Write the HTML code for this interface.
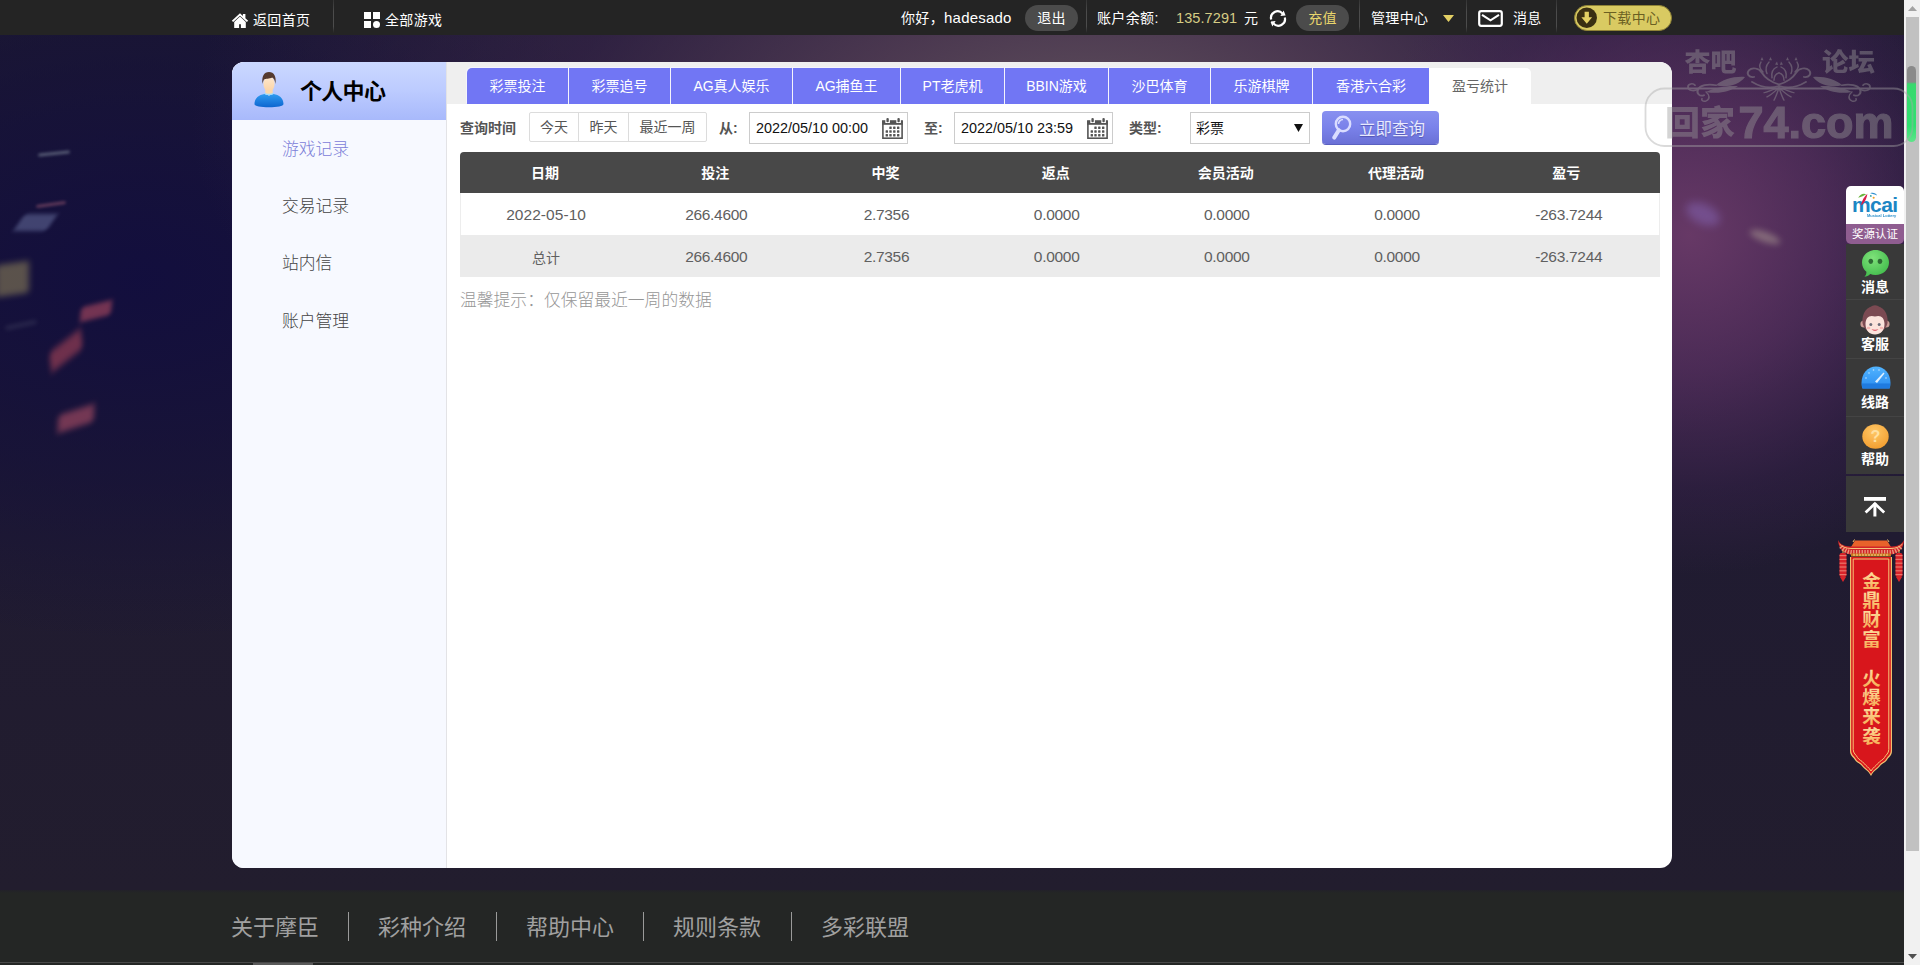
<!DOCTYPE html>
<html lang="zh-CN">
<head>
<meta charset="utf-8">
<title>个人中心 - 盈亏统计</title>
<style>
*{box-sizing:border-box;margin:0;padding:0}
html,body{width:1920px;height:965px;overflow:hidden}
body{position:relative;font-family:"Liberation Sans","Noto Sans CJK SC",sans-serif;font-size:14px;color:#555;background:#221d2e}
ul{list-style:none}
.abs{position:absolute}
/* ---------- page background ---------- */
#bg{position:absolute;left:0;top:0;width:1904px;height:890px;overflow:hidden;
 background:
  radial-gradient(ellipse 340px 340px at 1690px 235px,rgba(106,58,104,.95) 0%,rgba(92,50,98,.7) 40%,rgba(70,38,86,.32) 75%,rgba(50,30,70,0) 100%),
  radial-gradient(ellipse 900px 420px at 1090px 120px,rgba(98,82,94,.95) 0%,rgba(84,62,86,.82) 28%,rgba(62,40,78,.55) 58%,rgba(40,28,62,0) 100%),
  radial-gradient(ellipse 560px 360px at 140px 280px,rgba(18,14,62,.95) 0%,rgba(20,16,58,.6) 55%,rgba(24,20,50,0) 100%),
  linear-gradient(180deg,#1d1931 0%,#1c1736 30%,#201b31 60%,#221d2e 100%);}
.cf{position:absolute;filter:blur(2.5px);border-radius:2px;opacity:.55}
/* ---------- top bar ---------- */
#top{position:absolute;left:0;top:0;width:1904px;height:35px;background:#242424;color:#fff;font-size:14px}
#top .t{position:absolute;white-space:nowrap;line-height:20px;letter-spacing:.35px}
#top .sep{position:absolute;top:0;width:1px;height:33px;background:linear-gradient(180deg,rgba(76,76,76,.4),rgba(76,76,76,1) 35%,rgba(76,76,76,1) 80%,rgba(76,76,76,0))}
.pill{position:absolute;top:5px;height:26px;border-radius:13px;background:#4b4b4b;text-align:center;line-height:26px;font-size:14px;letter-spacing:.35px}
/* ---------- panel ---------- */
#panel{position:absolute;left:232px;top:62px;width:1440px;height:806px;background:#fff;border-radius:12px;overflow:hidden}
#side{position:absolute;left:0;top:0;width:214px;height:806px;background:#f7f9ff}
#sideline{position:absolute;left:214px;top:0;width:1px;height:806px;background:#e3e3e6}
#shead{position:absolute;left:0;top:0;width:214px;height:58px;background:linear-gradient(180deg,#cbd8ff 0%,#bccbff 50%,#a8b9fb 100%)}
#shead b{position:absolute;left:68px;top:13.500px;font-size:22px;line-height:32px;color:#000;font-weight:bold;letter-spacing:-.7px}
#side li{position:absolute;left:50px;font-size:16.800px;line-height:24px;color:#444;white-space:nowrap;font-weight:300}
#side li.on{color:#7c80d8}
/* tabs */
#tabbar{position:absolute;left:215px;top:0;width:1225px;height:42px;background:#efefef}
.tab{position:absolute;top:6px;height:36px;background:#7176f4;box-shadow:-1px -1px 0 #f4f4fc;color:#fff;font-size:14px;line-height:36px;text-align:center;white-space:nowrap}
.tab.on{background:#fff;box-shadow:none;color:#666;border-radius:0 5px 0 0}
/* filter */
.lbl{position:absolute;font-weight:bold;color:#555;font-size:14px;line-height:20px;white-space:nowrap}
.bgrp{position:absolute;left:297px;top:50px;width:178px;height:30px;border:1px solid #dcdcdc;border-radius:2px;background:#fff}
.bgrp span{position:absolute;top:0;height:28px;line-height:28px;text-align:center;color:#555;font-size:14px}
.inp{position:absolute;top:50px;width:159px;height:32px;border:1px solid #ccc;border-radius:0;background:#fff;color:#111;font-size:14.4px;line-height:30px;padding-left:6px;white-space:nowrap}
/* table */
#tbl{position:absolute;left:228px;top:90px;width:1200px;border-collapse:collapse;table-layout:fixed}
#tbl th{height:41px;background:#484848;color:#fff;font-weight:bold;font-size:14px;text-align:center;padding:0 0 1px}
#tbl td{height:42px;text-align:center;color:#606060;font-size:15.500px;letter-spacing:-.3px;padding:1px 0 0 2px}
#tbl tr.r1 td{background:#fff}
#tbl tr.r1 td:first-child{box-shadow:inset 1px 0 0 #ededed}
#tbl tr.r1 td:last-child{box-shadow:inset -1px 0 0 #ededed}
#tbl tr.r2 td{background:#ebebeb}
#note{position:absolute;left:228px;top:226.500px;font-size:16.800px;line-height:24px;color:#969696;white-space:nowrap;font-weight:300}
#qbtn{position:absolute;left:1090px;top:49px;width:117px;height:33px;border-radius:4px;background:linear-gradient(180deg,#8890f0 0%,#7a82ea 50%,#6a70d6 100%);box-shadow:0 1px 0 #5a60c0}
#qbtn span{position:absolute;left:37px;top:5.500px;font-size:16.500px;line-height:24px;color:#e8eaff;white-space:nowrap;text-shadow:0 1px 1px rgba(60,60,150,.6)}
/* footer */
#foot{position:absolute;left:0;top:890px;width:1904px;height:75px;background:linear-gradient(180deg,#222129 0,#242625 3px,#242625 100%)}
#foot span{position:absolute;top:24px;font-size:22px;line-height:28px;color:#a0a0a0;white-space:nowrap}
#foot i{position:absolute;top:22px;width:1px;height:29px;background:#9a9a9a}
/* scrollbar */
#sb{position:absolute;left:1904px;top:0;width:16px;height:965px;background:#f1f1f1}
/* float bar */
#fb{position:absolute;left:1846px;top:186px;width:58px;color:#fff}
#fb .logo{position:absolute;left:0;top:0;width:58px;height:38px;background:#fff;border-radius:5px 5px 0 0}
#fb .logo b{position:absolute;left:6px;top:6.500px;font-size:21px;line-height:24px;font-weight:bold;color:#1c86c4;letter-spacing:-.6px}
#fb .logo em{position:absolute;left:21px;top:27px;font-size:5px;line-height:7px;font-style:normal;font-weight:bold;color:#2a8fca;white-space:nowrap;transform:scale(.8);transform-origin:0 0}
#fb .cert{position:absolute;left:0;top:38px;width:58px;height:20px;background:#8f5d90;border-radius:0 0 5px 5px;font-size:11.500px;line-height:20px;text-align:center;color:#fff;white-space:nowrap}
#fb .it{position:absolute;left:0;width:58px;background:#393939;border-top:1px solid #444}
#fb .it span{position:absolute;left:0;width:58px;text-align:center;font-size:14px;line-height:18px;font-weight:bold;color:#fff}
</style>
</head>
<body>
<div id="bg">
  <i class="cf" style="left:38px;top:152px;width:32px;height:3px;background:#8c98a6;transform:rotate(-6deg);filter:blur(1.5px)"></i>
  <i class="cf" style="left:36px;top:203px;width:30px;height:3px;background:#a25c74;transform:rotate(-8deg);filter:blur(1.5px)"></i>
  <i class="cf" style="left:19px;top:214px;width:33px;height:17px;background:#666e9c;transform:skewX(-35deg);filter:blur(2px)"></i>
  <i class="cf" style="left:-4px;top:263px;width:33px;height:32px;background:#a0935c;transform:skewY(-8deg);filter:blur(3px);opacity:.5"></i>
  <i class="cf" style="left:5px;top:323px;width:32px;height:4px;background:#3c3c5c;transform:rotate(-12deg);filter:blur(2px)"></i>
  <i class="cf" style="left:80px;top:304px;width:32px;height:14px;background:#c25264;transform:rotate(-14deg) skewX(-20deg);filter:blur(2.5px)"></i>
  <i class="cf" style="left:46px;top:342px;width:40px;height:17px;background:#b84a5a;transform:rotate(-38deg) skewX(-30deg);filter:blur(3px)"></i>
  <i class="cf" style="left:57px;top:410px;width:38px;height:17px;background:#c0566a;transform:rotate(-18deg) skewX(-20deg);filter:blur(3px)"></i>
  <i class="cf" style="left:1685px;top:204px;width:36px;height:20px;background:#8a6cc0;border-radius:50%;transform:rotate(25deg);filter:blur(4px);opacity:.45"></i>
  <i class="cf" style="left:1749px;top:232px;width:32px;height:10px;background:#b0a296;border-radius:50%;transform:rotate(20deg);filter:blur(3px);opacity:.5"></i>
</div>
<div id="top">
  <svg class="abs" style="left:231px;top:11.500px" width="18" height="17" viewBox="0 0 18 17"><path d="M9 1.200 L.8 8.800 L2.200 9.900 L9 3.700 L15.800 9.900 L17.200 8.800 L14.400 6.200 L14.400 2 L11.900 2 L11.900 3.900 Z" fill="#fff"/><path d="M9 4.600 L3.200 9.900 L3.200 16 L8.100 16 L8.100 12.200 L9.900 12.200 L9.900 16 L14.800 16 L14.800 9.900 Z" fill="#fff"/></svg>
  <span class="t" style="left:253px;top:10px">返回首页</span>
  <i class="sep" style="left:333px"></i>
  <svg class="abs" style="left:364px;top:12px" width="16" height="16" viewBox="0 0 16 16"><rect x="0" y="0" width="7" height="7" fill="#fff"/><rect x="9" y="0" width="7" height="7" fill="#fff"/><rect x="0" y="9" width="7" height="7" fill="#fff"/><circle cx="12.5" cy="12.5" r="3.5" fill="#fff"/></svg>
  <span class="t" style="left:385px;top:10px">全部游戏</span>
  <span class="t" style="left:901px;top:8px">你好，<span style="font-size:15px;letter-spacing:.2px">hadesado</span></span>
  <span class="pill" style="left:1025px;width:53px">退出</span>
  <i class="sep" style="left:1086px"></i>
  <span class="t" style="left:1097px;top:8px">账户余额:</span>
  <span class="t" style="left:1176px;top:8px;color:#d6cc84;font-size:14.500px;letter-spacing:.1px">135.7291</span>
  <span class="t" style="left:1244px;top:8px">元</span>
  <svg class="abs" style="left:1268px;top:9px" width="20" height="19" viewBox="0 0 20 19"><g fill="none" stroke="#fff" stroke-width="2.2"><path d="M3.2 10.5 A6.6 6.6 0 0 1 14.6 4.6"/><path d="M16.8 8.5 A6.6 6.6 0 0 1 5.4 14.4"/></g><path d="M12.4 7 L17.6 6.4 L15.6 1.6 Z" fill="#fff"/><path d="M7.6 12 L2.4 12.6 L4.4 17.4 Z" fill="#fff"/></svg>
  <span class="pill" style="left:1296px;width:53px;color:#e8d56c">充值</span>
  <i class="sep" style="left:1359px"></i>
  <span class="t" style="left:1371px;top:8px">管理中心</span>
  <svg class="abs" style="left:1443px;top:15px" width="11" height="7" viewBox="0 0 11 7"><path d="M0 0 L11 0 L5.5 7 Z" fill="#e3cf64"/></svg>
  <i class="sep" style="left:1466px"></i>
  <svg class="abs" style="left:1478px;top:10px" width="25" height="17" viewBox="0 0 25 17"><rect x="1.200" y="1.200" width="22.600" height="14.600" rx="2" fill="none" stroke="#fff" stroke-width="2.200"/><path d="M4 4.800 L12.500 10.400 L21 4.800" fill="none" stroke="#fff" stroke-width="2"/></svg>
  <span class="t" style="left:1513px;top:8px">消息</span>
  <i class="sep" style="left:1556px"></i>
  <span class="pill" style="left:1574px;width:98px;background:#d9ca62;border:1px solid #8f8336;line-height:24px"></span>
  <svg class="abs" style="left:1575.500px;top:7px" width="21.500" height="21.500" viewBox="0 0 20 20"><circle cx="10" cy="10" r="9.5" fill="#3a2f12"/><path d="M8 4.5 H12 V9.5 H15 L10 15.5 L5 9.5 H8 Z" fill="#e3cf64"/></svg>
  <span class="t" style="left:1603px;top:8px;color:#6b5f22">下载中心</span>
</div>
<div id="panel">
  <div id="side">
    <div id="shead">
      <svg class="abs" style="left:21px;top:9px" width="32" height="38" viewBox="0 0 32 38">
        <defs>
          <linearGradient id="gb" x1="0" y1="0" x2="0" y2="1"><stop offset="0" stop-color="#2f9bf0"/><stop offset="1" stop-color="#0d66d0"/></linearGradient>
          <linearGradient id="gf" x1="0" y1="0" x2="0" y2="1"><stop offset="0" stop-color="#ffe9cf"/><stop offset="1" stop-color="#fbd3a6"/></linearGradient>
        </defs>
        <path d="M1.500 33 C1.500 27 6 23.800 11.500 23 L16 24.500 L20.500 23 C26 23.800 30.500 27 30.500 33 C30.500 35.300 24 36.200 16 36.200 C8 36.200 1.500 35.300 1.500 33 Z" fill="url(#gb)"/>
        <path d="M12.300 18 H19.700 V22.800 L16 24.600 L12.300 22.800 Z" fill="#fbd6a8"/>
        <path d="M11 22.600 C13 24.800 19 24.800 21 22.600 L20.400 21.800 C18.500 23.200 13.500 23.200 11.600 21.800 Z" fill="#9fdcff"/>
        <ellipse cx="16" cy="12.800" rx="5.600" ry="7.600" fill="url(#gf)"/>
        <path d="M9.600 13 C8.300 5.500 11 1 16 1 C21 1 23.700 5.500 22.400 13 C22 9.500 21 7.200 19.200 6.400 C16.500 8 12.500 7.200 11 8.400 C10.300 9.600 9.900 11 9.600 13 Z" fill="#553a2e"/>
      </svg>
      <b>个人中心</b>
    </div>
    <ul>
      <li class="on" style="top:76px">游戏记录</li>
      <li style="top:133px">交易记录</li>
      <li style="top:190px">站内信</li>
      <li style="top:248px">账户管理</li>
    </ul>
  </div>
  <div id="sideline"></div>
  <div id="tabbar">
    <span class="tab" style="left:20px;width:101px;border-radius:5px 0 0 0">彩票投注</span>
    <span class="tab" style="left:122px;width:101px">彩票追号</span>
    <span class="tab" style="left:224px;width:121px">AG真人娱乐</span>
    <span class="tab" style="left:346px;width:107px">AG捕鱼王</span>
    <span class="tab" style="left:454px;width:103px">PT老虎机</span>
    <span class="tab" style="left:558px;width:103px">BBIN游戏</span>
    <span class="tab" style="left:662px;width:101px">沙巴体育</span>
    <span class="tab" style="left:764px;width:101px">乐游棋牌</span>
    <span class="tab" style="left:866px;width:116px">香港六合彩</span>
    <span class="tab on" style="left:982px;width:102px">盈亏统计</span>
  </div>
  <div id="main">
    <span class="lbl" style="left:228px;top:56px">查询时间</span>
    <div class="bgrp"><span style="left:0;width:48px">今天</span><span style="left:48px;width:50px;border-left:1px solid #dcdcdc">昨天</span><span style="left:98px;width:78px;border-left:1px solid #dcdcdc">最近一周</span></div>
    <span class="lbl" style="left:487px;top:56px">从:</span>
    <div class="inp" style="left:517px">2022/05/10 00:00</div>
    <svg class="abs" style="left:650px;top:56px" width="21" height="21" viewBox="0 0 21 21"><rect x=".9" y="3.300" width="19.200" height="16.900" fill="#fff" stroke="#555" stroke-width="1.600"/><rect x=".1" y="2.400" width="20.800" height="4.400" fill="#555"/><rect x="3.300" y="0" width="4.600" height="5" fill="#fff"/><rect x="14.300" y="0" width="4.600" height="5" fill="#fff"/><rect x="4.400" y="0" width="2.400" height="4.300" rx="1.100" fill="#555"/><rect x="15.400" y="0" width="2.400" height="4.300" rx="1.100" fill="#555"/><g fill="#555"><rect x="7.3" y="8.6" width="2.400" height="2.400" rx=".5"/><rect x="11.1" y="8.6" width="2.400" height="2.400" rx=".5"/><rect x="15.0" y="8.6" width="2.400" height="2.400" rx=".5"/><rect x="3.6" y="12.3" width="2.400" height="2.400" rx=".5"/><rect x="7.3" y="12.3" width="2.400" height="2.400" rx=".5"/><rect x="11.1" y="12.3" width="2.400" height="2.400" rx=".5"/><rect x="15.0" y="12.3" width="2.400" height="2.400" rx=".5"/><rect x="3.6" y="16.0" width="2.400" height="2.400" rx=".5"/><rect x="7.3" y="16.0" width="2.400" height="2.400" rx=".5"/><rect x="11.1" y="16.0" width="2.400" height="2.400" rx=".5"/><rect x="15.0" y="16.0" width="2.400" height="2.400" rx=".5"/></g></svg>
    <span class="lbl" style="left:692px;top:56px">至:</span>
    <div class="inp" style="left:722px">2022/05/10 23:59</div>
    <svg class="abs" style="left:855px;top:56px" width="21" height="21" viewBox="0 0 21 21"><rect x=".9" y="3.300" width="19.200" height="16.900" fill="#fff" stroke="#555" stroke-width="1.600"/><rect x=".1" y="2.400" width="20.800" height="4.400" fill="#555"/><rect x="3.300" y="0" width="4.600" height="5" fill="#fff"/><rect x="14.300" y="0" width="4.600" height="5" fill="#fff"/><rect x="4.400" y="0" width="2.400" height="4.300" rx="1.100" fill="#555"/><rect x="15.400" y="0" width="2.400" height="4.300" rx="1.100" fill="#555"/><g fill="#555"><rect x="7.3" y="8.6" width="2.400" height="2.400" rx=".5"/><rect x="11.1" y="8.6" width="2.400" height="2.400" rx=".5"/><rect x="15.0" y="8.6" width="2.400" height="2.400" rx=".5"/><rect x="3.6" y="12.3" width="2.400" height="2.400" rx=".5"/><rect x="7.3" y="12.3" width="2.400" height="2.400" rx=".5"/><rect x="11.1" y="12.3" width="2.400" height="2.400" rx=".5"/><rect x="15.0" y="12.3" width="2.400" height="2.400" rx=".5"/><rect x="3.6" y="16.0" width="2.400" height="2.400" rx=".5"/><rect x="7.3" y="16.0" width="2.400" height="2.400" rx=".5"/><rect x="11.1" y="16.0" width="2.400" height="2.400" rx=".5"/><rect x="15.0" y="16.0" width="2.400" height="2.400" rx=".5"/></g></svg>
    <span class="lbl" style="left:897px;top:56px">类型:</span>
    <div class="inp" style="left:958px;width:120px;padding-left:5px;font-size:14px">彩票<svg class="abs" style="left:103px;top:11px" width="9" height="8" viewBox="0 0 9 8"><path d="M0 0 H9 L4.500 8 Z" fill="#111"/></svg></div>
    <div id="qbtn"><svg class="abs" style="left:8px;top:4px" width="22" height="26" viewBox="0 0 22 26"><circle cx="13" cy="9" r="7.200" fill="none" stroke="#d9dcff" stroke-width="2.400"/><path d="M8.500 9 A4.500 4.500 0 0 1 13 4.500" fill="none" stroke="#d9dcff" stroke-width="1.600"/><path d="M8.800 15.200 L4.200 22.600" stroke="#d9dcff" stroke-width="4" stroke-linecap="round"/></svg><span>立即查询</span></div>
    <table id="tbl"><colgroup><col style="width:170.200px"><col style="width:170.200px"><col style="width:170.200px"><col style="width:170.200px"><col style="width:170.200px"><col style="width:170.200px"><col style="width:170.200px"><col></colgroup>
      <tr><th style="border-radius:4px 0 0 0">日期</th><th>投注</th><th>中奖</th><th>返点</th><th>会员活动</th><th>代理活动</th><th>盈亏</th><th style="border-radius:0 4px 0 0"></th></tr>
      <tr class="r1"><td style="letter-spacing:.05px">2022-05-10</td><td>266.4600</td><td>2.7356</td><td>0.0000</td><td>0.0000</td><td>0.0000</td><td style="padding-left:5px">-263.7244</td><td></td></tr>
      <tr class="r2"><td style="font-size:14px;letter-spacing:0">总计</td><td>266.4600</td><td>2.7356</td><td>0.0000</td><td>0.0000</td><td>0.0000</td><td style="padding-left:5px">-263.7244</td><td></td></tr>
    </table>
    <div id="note">温馨提示：仅保留最近一周的数据</div>
  </div>
</div>
<div id="fb">
  <div class="logo"><b>mcai</b><em>Musical Lottery</em>
    <svg class="abs" style="left:11px;top:6px" width="23" height="15" viewBox="0 0 20 13"><path d="M1 5 C3 1.500 6 1 8 2 C6 3 4 4.500 1 5 Z" fill="#6ab43c"/><path d="M9 1.500 C6.500 4 4 7.500 3.500 11.500 C6.500 10 8.500 5.500 9 1.500 Z" fill="#d81e4a"/><path d="M11.500 1 C14 .200 16.500 1 17.500 3 C15.500 2 13.500 1.600 11.500 1 Z" fill="#2b8fd0"/><circle cx="14.500" cy="5" r=".9" fill="#f0a020"/><circle cx="12" cy="3.400" r=".8" fill="#30a0a0"/></svg>
  </div>
  <div class="cert">奖源认证</div>
  <div class="it" style="top:58px;height:55px;border-top:0">
    <svg class="abs" style="left:15px;top:5px" width="29" height="29" viewBox="0 0 29 29"><defs><radialGradient id="gg" cx=".4" cy=".3" r=".8"><stop offset="0" stop-color="#7fe27a"/><stop offset="1" stop-color="#3cb848"/></radialGradient></defs><path d="M14.500 1 C22 1 28 6.500 28 13.500 C28 20.500 22 26 14.500 26 C12.500 26 10.800 25.700 9.200 25.100 C7.600 26.800 5.400 27.800 3.400 27.800 C4.800 26.400 5.500 24.600 5.400 22.800 C2.700 20.500 1 17.200 1 13.500 C1 6.500 7 1 14.500 1 Z" fill="url(#gg)"/><ellipse cx="9.800" cy="12.300" rx="2.300" ry="2.600" fill="#2d6a34"/><ellipse cx="19" cy="12.300" rx="2.300" ry="2.600" fill="#2d6a34"/></svg>
    <span style="top:34px">消息</span></div>
  <div class="it" style="top:113px;height:59px">
    <svg class="abs" style="left:14px;top:5px" width="30" height="31" viewBox="0 0 30 31"><circle cx="4" cy="19" r="3.600" fill="#c99a94"/><circle cx="26" cy="19" r="3.600" fill="#c99a94"/><path d="M2.500 18 C1.500 8 7 1 15 1 C23 1 28.500 8 27.500 18 C26 24 22 28 15 28 C8 28 4 24 2.500 18 Z" fill="#7b4a52"/><path d="M11 2.500 C12 -.500 18 -.500 19 2.500 Z" fill="#7b4a52"/><path d="M5.500 19 C5.500 12.500 9.500 9.500 15 11.500 C20.500 9.500 24.500 12.500 24.500 19 C24.500 25.500 20.500 29.500 15 29.500 C9.500 29.500 5.500 25.500 5.500 19 Z" fill="#fbe3dc"/><circle cx="10.800" cy="19.500" r="1.500" fill="#6a6a78"/><circle cx="19.200" cy="19.500" r="1.500" fill="#6a6a78"/><path d="M11.500 24 C13.500 26.500 16.500 26.500 18.500 24 C16.500 25 13.500 25 11.500 24 Z" fill="#e05a6a"/><ellipse cx="8.600" cy="23" rx="1.800" ry="1.200" fill="#f6b8b4"/><ellipse cx="21.400" cy="23" rx="1.800" ry="1.200" fill="#f6b8b4"/></svg>
    <span style="top:35px">客服</span></div>
  <div class="it" style="top:172px;height:58px">
    <svg class="abs" style="left:15px;top:7px" width="30" height="23" viewBox="0 0 30 23"><defs><linearGradient id="gl" x1="0" y1="0" x2="0" y2="1"><stop offset="0" stop-color="#52b4ff"/><stop offset="1" stop-color="#2a8cf0"/></linearGradient></defs><path d="M.500 17 C.500 7.500 6.800 .500 15 .500 C23.200 .500 29.500 7.500 29.500 17 C29.500 19.500 29 21.500 28.500 22.500 H1.500 C1 21.500 .500 19.500 .500 17 Z" fill="url(#gl)"/><path d="M1 17.500 H29 C29 20 28.800 21.500 28.500 22.500 H1.500 C1.200 21.500 1 20 1 17.500 Z" fill="#1f7be0"/><path d="M14 15.500 L22.500 6.500 L23.500 7.500 L16 17 Z" fill="#dff0ff"/><g fill="#bfe2ff"><circle cx="5" cy="12" r=".8"/><circle cx="8" cy="7" r=".8"/><circle cx="12.500" cy="4" r=".8"/><circle cx="18" cy="4" r=".8"/><circle cx="25" cy="12" r=".8"/></g></svg>
    <span style="top:34px">线路</span></div>
  <div class="it" style="top:230px;height:58px">
    <svg class="abs" style="left:16px;top:7px" width="27" height="25" viewBox="0 0 27 25"><defs><radialGradient id="go" cx=".45" cy=".3" r=".8"><stop offset="0" stop-color="#ffc766"/><stop offset="1" stop-color="#f19a2a"/></radialGradient></defs><ellipse cx="13.500" cy="12.500" rx="13.200" ry="12.200" fill="url(#go)"/><text x="13.500" y="18" font-family="Liberation Sans,sans-serif" font-size="16" font-weight="bold" text-anchor="middle" fill="#ffe0a0">?</text></svg>
    <span style="top:33px">帮助</span></div>
  <div class="it" style="top:290px;height:56px;border-top:0">
    <svg class="abs" style="left:18px;top:21px" width="22" height="20" viewBox="0 0 22 20"><rect x="0" y="0" width="22" height="3.800" fill="#fff"/><path d="M10.900 6 V19.500" stroke="#fff" stroke-width="3"/><path d="M1.600 15.600 L10.900 6.600 L20.200 15.600" fill="none" stroke="#fff" stroke-width="2.800"/></svg>
  </div>
</div>
<svg class="abs" style="left:1838px;top:538px" width="66" height="240" viewBox="0 0 66 240"><defs><linearGradient id="gt" x1="0" y1="0" x2="0" y2="1"><stop offset="0" stop-color="#ffe8b0"/><stop offset="1" stop-color="#f6a84c"/></linearGradient></defs><path d="M12 19 H54 V213 C54 218 50.500 219 49 222 C47.500 225 44 225 42 228 C40 231 36 232 33 238 C30 232 26 231 24 228 C22 225 18.500 225 17 222 C15.500 219 12 218 12 213 Z" fill="#f0c070"/><path d="M13.200 19 H52.800 V212.500 C52.800 217 49.500 218.200 48 221.200 C46.500 224 43.200 224.200 41.200 227.200 C39.200 230 35.600 231.200 33 236 C30.400 231.200 26.800 230 24.800 227.200 C22.800 224.200 19.500 224 18 221.200 C16.500 218.200 13.200 217 13.200 212.500 Z" fill="#d8161c"/><path d="M15.200 21 H50.800 V211.500 C50.800 215.500 47.800 216.800 46.400 219.600 C45 222.200 42 222.600 40 225.400 C38 228 35 229.400 33 233 C31 229.400 28 228 26 225.400 C24 222.600 21 222.200 19.600 219.600 C18.200 216.800 15.200 215.500 15.200 211.500 Z" fill="none" stroke="#f6c878" stroke-width="1"/><path d="M17 2.500 H49 L53 9 H13 Z" fill="#e8622a"/><path d="M16.500 1.500 L15 4 M49.500 1.500 L51 4" stroke="#f0c070" stroke-width="1"/><path d="M0 2 C2 6.500 6 8 12 8.500 H54 C60 8 64 6.500 66 2 C65.500 10.500 61 15.500 53 16.500 H13 C5 15.500 .500 10.500 0 2 Z" fill="#d02428"/><path d="M3 8.500 C6 12.500 10 14 14 14.300 H52 C56 14 60 12.500 63 8.500" fill="none" stroke="#f0b090" stroke-width="4.500" stroke-dasharray="1.300 1.500" opacity=".85"/><path d="M1.500 6 C4 9 8 10.300 13 10.500 H53 C58 10.300 62 9 64.500 6" fill="none" stroke="#f6c27a" stroke-width="1"/><rect x="13" y="15.500" width="40" height="3" fill="#c8781e"/><path d="M15 17 H51" stroke="#f6d890" stroke-width="1" stroke-dasharray="2 1"/><g><path d="M5.0 12 V16" stroke="#e9b45a" stroke-width="1"/><rect x="1.5" y="15" width="7" height="24" rx="2" fill="#d8232a"/><rect x="1.5" y="17.0" width="7" height="1.2" fill="#f08a7a" opacity=".8"/><rect x="1.5" y="20.8" width="7" height="1.2" fill="#f08a7a" opacity=".8"/><rect x="1.5" y="24.6" width="7" height="1.2" fill="#f08a7a" opacity=".8"/><rect x="1.5" y="28.4" width="7" height="1.2" fill="#f08a7a" opacity=".8"/><rect x="1.5" y="32.2" width="7" height="1.2" fill="#f08a7a" opacity=".8"/><rect x="1.5" y="36.0" width="7" height="1.2" fill="#f08a7a" opacity=".8"/><path d="M2.0 39 L5.0 44 L8.0 39 Z" fill="#d8232a"/></g><g><path d="M61.0 12 V16" stroke="#e9b45a" stroke-width="1"/><rect x="57.5" y="15" width="7" height="24" rx="2" fill="#d8232a"/><rect x="57.5" y="17.0" width="7" height="1.2" fill="#f08a7a" opacity=".8"/><rect x="57.5" y="20.8" width="7" height="1.2" fill="#f08a7a" opacity=".8"/><rect x="57.5" y="24.6" width="7" height="1.2" fill="#f08a7a" opacity=".8"/><rect x="57.5" y="28.4" width="7" height="1.2" fill="#f08a7a" opacity=".8"/><rect x="57.5" y="32.2" width="7" height="1.2" fill="#f08a7a" opacity=".8"/><rect x="57.5" y="36.0" width="7" height="1.2" fill="#f08a7a" opacity=".8"/><path d="M58.0 39 L61.0 44 L64.0 39 Z" fill="#d8232a"/></g><text x="33.600" y="50.0" font-family="Noto Sans CJK SC,sans-serif" font-size="18.500" font-weight="700" text-anchor="middle" fill="url(#gt)">金</text><text x="33.600" y="69.2" font-family="Noto Sans CJK SC,sans-serif" font-size="18.500" font-weight="700" text-anchor="middle" fill="url(#gt)">鼎</text><text x="33.600" y="88.4" font-family="Noto Sans CJK SC,sans-serif" font-size="18.500" font-weight="700" text-anchor="middle" fill="url(#gt)">财</text><text x="33.600" y="107.6" font-family="Noto Sans CJK SC,sans-serif" font-size="18.500" font-weight="700" text-anchor="middle" fill="url(#gt)">富</text><text x="33.600" y="147.0" font-family="Noto Sans CJK SC,sans-serif" font-size="18.500" font-weight="700" text-anchor="middle" fill="url(#gt)">火</text><text x="33.600" y="166.2" font-family="Noto Sans CJK SC,sans-serif" font-size="18.500" font-weight="700" text-anchor="middle" fill="url(#gt)">爆</text><text x="33.600" y="185.4" font-family="Noto Sans CJK SC,sans-serif" font-size="18.500" font-weight="700" text-anchor="middle" fill="url(#gt)">来</text><text x="33.600" y="204.6" font-family="Noto Sans CJK SC,sans-serif" font-size="18.500" font-weight="700" text-anchor="middle" fill="url(#gt)">袭</text></svg>
<svg id="wm" class="abs" style="left:1640px;top:40px;opacity:.42;z-index:9" width="280" height="120" viewBox="0 0 280 120">
  <g fill="none" stroke="#9a9a9a" stroke-width="2" stroke-linecap="round">
    <g transform="translate(6,10.400) scale(1,.83)"><path d="M133 41 C125 38 119 33 116 27 C113 21 106 20 103 24 C100 28 103 33 108 32"/>
<path d="M133 43 C124 46 114 44 106 38"/>
<path d="M99 32 C88 31 76 35 70 42 C80 45 93 42 99 32 Z" fill="#9a9a9a" stroke="none"/>
<path d="M92 43 C84 50 72 53 60 50 C68 45 80 42 92 43 Z" fill="#9a9a9a" stroke="none"/>
<path d="M70 42 C62 40 54 42 52 47 C50 52 54 56 58 54"/>
<path d="M60 50 C64 54 64 59 60 61 C57 62 55 60 56 58" stroke-width="1.600"/>
<path d="M52 47 C47 50 42 48 42 44 C42 40 47 39 49 42" stroke-width="1.800"/>
<path d="M133 45 C128 50 125 54 121 56 M133 45 C131 52 130 56 128 60 M133 45 C126 47 122 50 118 51" stroke-width="1.500"/>
<path d="M121 28 C119 22 120 18 123 14 M117 26 C113 22 113 18 115 14 M126 33 C125 26 127 22 131 20 M128 36 C128 31 130 28 133 27" stroke-width="1.500"/>
<path d="M123 12 l1.500 -4 l1.500 4 z M114.500 12 l1.500 -4 l1.500 4 z M129 17 l2 -3.500 l1 4 z" fill="#9a9a9a" stroke="none"/></g>
    <g transform="translate(272,10.400) scale(-1,.83)"><path d="M133 41 C125 38 119 33 116 27 C113 21 106 20 103 24 C100 28 103 33 108 32"/>
<path d="M133 43 C124 46 114 44 106 38"/>
<path d="M99 32 C88 31 76 35 70 42 C80 45 93 42 99 32 Z" fill="#9a9a9a" stroke="none"/>
<path d="M92 43 C84 50 72 53 60 50 C68 45 80 42 92 43 Z" fill="#9a9a9a" stroke="none"/>
<path d="M70 42 C62 40 54 42 52 47 C50 52 54 56 58 54"/>
<path d="M60 50 C64 54 64 59 60 61 C57 62 55 60 56 58" stroke-width="1.600"/>
<path d="M52 47 C47 50 42 48 42 44 C42 40 47 39 49 42" stroke-width="1.800"/>
<path d="M133 45 C128 50 125 54 121 56 M133 45 C131 52 130 56 128 60 M133 45 C126 47 122 50 118 51" stroke-width="1.500"/>
<path d="M121 28 C119 22 120 18 123 14 M117 26 C113 22 113 18 115 14 M126 33 C125 26 127 22 131 20 M128 36 C128 31 130 28 133 27" stroke-width="1.500"/>
<path d="M123 12 l1.500 -4 l1.500 4 z M114.500 12 l1.500 -4 l1.500 4 z M129 17 l2 -3.500 l1 4 z" fill="#9a9a9a" stroke="none"/></g>
    <rect x="5.500" y="48.500" width="267" height="57.500" rx="19" ry="19" stroke-width="1.800" stroke="#a8a8a8"/>
  </g>
  <g fill="#9a9a9a" font-family="Liberation Sans,Noto Sans CJK SC,sans-serif" font-weight="900">
    <text x="44.500" y="31" font-size="25.500" textLength="52" lengthAdjust="spacingAndGlyphs">杏吧</text>
    <text x="182" y="31" font-size="25.500" textLength="53" lengthAdjust="spacingAndGlyphs">论坛</text>
    <text x="25" y="94.500" font-size="34.500" textLength="70" lengthAdjust="spacingAndGlyphs">回家</text>
    <text x="98.500" y="97.800" font-size="43.500" font-weight="bold" textLength="155" lengthAdjust="spacingAndGlyphs" stroke="#9a9a9a" stroke-width="1.200">74.com</text>
  </g>
</svg>
<div id="foot">
  <span style="left:231px">关于摩臣</span><i style="left:348px"></i>
  <span style="left:378px">彩种介绍</span><i style="left:496px"></i>
  <span style="left:526px">帮助中心</span><i style="left:643px"></i>
  <span style="left:673px">规则条款</span><i style="left:791px"></i>
  <span style="left:821px">多彩联盟</span>
  <div class="abs" style="left:0;top:72px;width:1904px;height:1px;background:#484848"></div>
  <div class="abs" style="left:253px;top:73px;width:60px;height:2px;background:#5a5a5a"></div>
</div>
<div id="sb">
  <svg class="abs" style="left:4px;top:6px" width="9" height="5" viewBox="0 0 9 5"><path d="M0 5 L4.500 0 L9 5 Z" fill="#a3a3a3"/></svg>
  <div class="abs" style="left:2px;top:17px;width:13px;height:834px;background:#c1c1c1"></div>
  <div class="abs" style="left:3px;top:66px;width:9px;height:76px;border-radius:4.500px;background:linear-gradient(180deg,#8a8a8a 0,#8a8a8a 16px,#39d96e 18px,#2fe070 60px,#5fe48a 76px)"></div>
  <svg class="abs" style="left:4px;top:954px" width="9" height="5" viewBox="0 0 9 5"><path d="M0 0 L4.500 5 L9 0 Z" fill="#505050"/></svg>
</div>
</body>
</html>
